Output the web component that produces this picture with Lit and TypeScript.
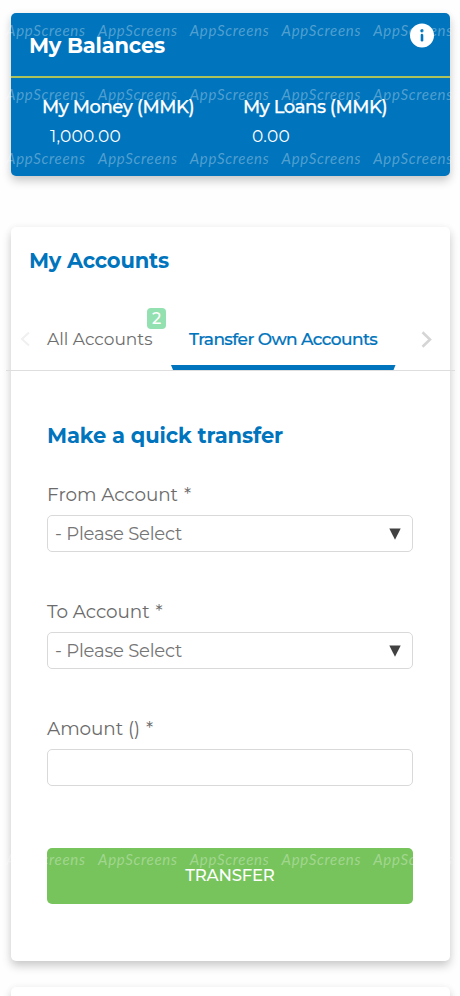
import { LitElement, html, svg, css } from "lit";

const WATERMARK_ROWS = [36, 99.5, 163.5, 864.5];
const WATERMARK_COLUMNS = [6, 98, 189.7, 281.5, 373.2];

class WatermarkLayer extends LitElement {
  static styles = css`
    :host { position: absolute; inset: 0; pointer-events: none; z-index: 2; }
    svg { display: block; }
    text { font: italic 400 15px Lato, sans-serif; fill: #fff; fill-opacity: 0.33; }
  `;
  render() {
    return html`<svg width="460" height="996" aria-hidden="true">
      ${WATERMARK_ROWS.map((y) => WATERMARK_COLUMNS.map((x) => svg`<text x=${x} y=${y} textLength="79">AppScreens</text>`))}
    </svg>`;
  }
}
customElements.define("watermark-layer", WatermarkLayer);

class SelectField extends LitElement {
  static properties = { label: {}, kind: {} };
  declare label: string;
  declare kind: string;
  static styles = css`
    :host { display: block; height: 117px; }
    .label { display: flex; gap: 6px; height: 22px; line-height: 22px; font-size: 18.4px; letter-spacing: -.06px; color: #6b6b6b; margin-bottom: 9px; }
    .box { box-sizing: border-box; height: 37px; border: 1px solid #d9d9d9; border-radius: 5px; background: #fff;
      display: flex; align-items: center; justify-content: space-between; padding: 0 11px 0 7px; font-size: 18px; letter-spacing: -.2px; color: #757575; }
    svg { display: block; }
  `;
  render() {
    return html`
      <div class="label"><span>${this.label}</span><span>*</span></div>
      <div class="box">
        ${this.kind === "amount" ? "" : html`<span>- Please Select</span>
          <svg width="12" height="12" viewBox="0 0 12 12"><path d="M.3.6h11.4L6 11.8z" fill="#414141" /></svg>`}
      </div>`;
  }
}
customElements.define("select-field", SelectField);

class AppRoot extends LitElement {
  static styles = css`
    :host { display: block; position: relative; box-sizing: border-box; height: 996px; overflow: hidden; padding: 13px 10.5px 0 10.5px;
      background: #fefefe; font-family: Montserrat, Inter, sans-serif; }
    * { box-sizing: border-box; }
    h2, h3 { margin: 0; font-weight: 700; white-space: nowrap; }
    .card { border-radius: 5px; background: #fff; box-shadow: 0 5px 10px rgba(0,0,0,.2), 0 0 8px rgba(0,0,0,.03); }
    .balances { height: 163px; background: #0074bc; color: #fff; }
    .head { height: 65px; border-bottom: 2px solid #adc25a; display: flex; justify-content: space-between; padding: 10px 16px 0 18.5px; }
    .head h2 { font-size: 21px; line-height: 26px; margin-top: 10px; letter-spacing: -.2px; }
    .head svg { display: block; }
    .totals { display: grid; grid-template-columns: 201px 1fr; padding: 17px 0 0 31.5px; }
    .name { font-size: 18px; line-height: 24px; font-weight: 500; letter-spacing: -.45px; white-space: nowrap; -webkit-text-stroke: .25px currentColor; }
    .value { font-size: 17px; line-height: 24px; padding: 5px 0 0 8px; letter-spacing: .25px; }
    .value.zero { padding-left: 9px; letter-spacing: .25px; }
    .accounts { height: 734px; margin-top: 51px; }
    .accounts > h2 { font-size: 21px; line-height: 26px; padding: 21px 0 0 18.5px; color: #0074bc; letter-spacing: -.2px; }
    .tabs { display: flex; align-items: flex-start; height: 97px; margin: 0 -5px; padding: 27px 23px 0 14px; border-bottom: 1px solid #dedede; }
    .arrow { display: block; margin-top: 30px; flex: none; }
    .tab { position: relative; height: 69px; line-height: 24px; padding-top: 26px; white-space: nowrap; font-size: 17px; color: #6d6d6d; }
    .all { width: 124px; margin-left: 17.5px; }
    .badge { position: absolute; left: 100px; top: 7px; width: 19px; height: 21px; border-radius: 4px; background: #93e0b1; color: #fff;
      font-size: 16px; font-weight: 500; line-height: 21px; text-align: center; }
    .own { width: 224.5px; padding-left: 18px; font-weight: 500; letter-spacing: -.59px; color: #0074bc; -webkit-text-stroke: .2px currentColor; }
    .own::after { content: ""; position: absolute; left: 0; right: 0; bottom: 0; height: 5px; background: #0074bc;
      clip-path: polygon(0 0, 100% 0, calc(100% - 2px) 100%, 2px 100%); }
    .next { margin-left: auto; }
    .form { padding: 52px 36.5px 0 36.5px; }
    h3 { font-size: 21px; line-height: 26px; color: #0074bc; letter-spacing: -.09px; margin-bottom: 35px; }
    .submit { display: block; width: 100%; height: 56px; margin-top: 13px; border: 0; border-radius: 5px; background: #77c45c; color: #fff;
      font: 500 16.5px Montserrat, Inter, sans-serif; letter-spacing: -.2px; padding: 0 0 3px; }
    .following { height: 60px; margin-top: 26px; }
  `;
  render() {
    return html`
      <section class="card balances">
        <div class="head">
          <h2>My Balances</h2>
          <svg width="24" height="25" viewBox="0 0 24 25"><circle cx="12" cy="12.5" r="12" fill="#fff" /><circle cx="12" cy="7.7" r="1.7" fill="#0074bc" /><path d="M12 12v5.2" stroke="#0074bc" stroke-width="2.6" stroke-linecap="round" /></svg>
        </div>
        <div class="totals">
          <div><div class="name">My Money (MMK)</div><div class="value">1,000.00</div></div>
          <div><div class="name">My Loans (MMK)</div><div class="value zero">0.00</div></div>
        </div>
      </section>
      <section class="card accounts">
        <h2>My Accounts</h2>
        <nav class="tabs">
          <svg class="arrow" width="10" height="16" viewBox="0 0 10 16"><path d="M9 1.5 2 8l7 6.5" fill="none" stroke="#f0f0f0" stroke-width="2" /></svg>
          <div class="tab all">All Accounts<span class="badge">2</span></div>
          <div class="tab own">Transfer Own Accounts</div>
          <svg class="arrow next" width="11" height="17" viewBox="0 0 11 17"><path d="M1.5 1.2 9 8.5l-7.5 7.3" fill="none" stroke="#d5d5d5" stroke-width="2.6" /></svg>
        </nav>
        <div class="form">
          <h3>Make a quick transfer</h3>
          <select-field label="From Account" kind="from"></select-field>
          <select-field label="To Account" kind="to"></select-field>
          <select-field label="Amount ()" kind="amount"></select-field>
          <button class="submit">TRANSFER</button>
        </div>
      </section>
      <section class="card following"></section>
      <watermark-layer></watermark-layer>`;
  }
}
customElements.define("app-root", AppRoot);
